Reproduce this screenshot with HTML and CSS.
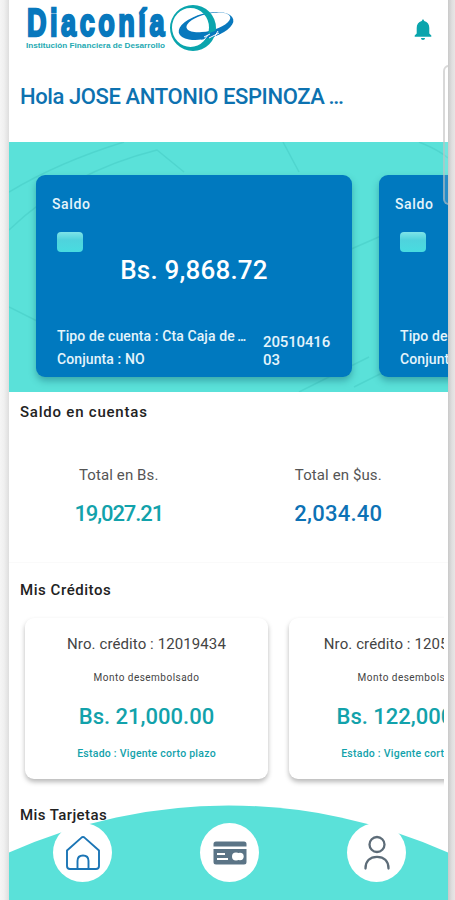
FILE: index.html
```html
<!DOCTYPE html>
<html lang="es">
<head>
    <meta charset="UTF-8">
    <meta name="viewport" content="width=device-width, initial-scale=1.0">
    <title>Diaconía</title>
    <link rel="stylesheet" href="styles.css">
</head>
<body>

<div class="phone">
    <header class="header">
        <svg class="logo" width="212" height="56" viewBox="0 0 212 56">
            <text class="logo-name" x="2" y="35.500" textLength="141" lengthAdjust="spacingAndGlyphs">Diaconía</text>
            <text class="logo-tag" x="1" y="47.500" textLength="139" lengthAdjust="spacingAndGlyphs">Institución Financiera de Desarrollo</text>
            <path fill="#0878bd" fill-rule="evenodd" d="M153.800 32.800A28 12.500 -14 1 1 208.200 19.200A28 12.500 -14 1 1 153.800 32.800zM161.500 27.800A22.500 8.500 -14 1 0 205.200 17A22.500 8.500 -14 1 0 161.500 27.800z"/>
            <path fill="#0aa5ad" fill-rule="evenodd" d="M145 28A23 23 0 1 1 191 28A23 23 0 1 1 145 28zM147 27.500A18.500 19.500 0 1 0 184 27.500A18.500 19.500 0 1 0 147 27.500z"/>
            <path fill="none" stroke="#0878bd" stroke-width="5" d="M176 37Q187 36 195 31"/>
            <path fill="none" stroke="#fff" stroke-width="1" d="M179 37l6-3M184 38l10-5M179 40l4-5M190 36l3-5"/>
        </svg>
        <svg class="bell" width="18" height="22" viewBox="0 0 18 22">
            <path fill="#0aa5ad" d="M9 0l1.300 2c3.300.800 5 3.400 5 7v5.500l2 2v1.300H.700v-1.300l2-2V9c0-3.600 1.700-6.200 5-7zM7 19h4c0 1.300-.800 2-2 2s-2-.700-2-2z"/>
        </svg>
    </header>
    <h1 class="greeting">Hola JOSE ANTONIO ESPINOZA <span class="dots">...</span></h1>

    <section class="banner">
        <svg class="banner-lines" width="439" height="250" viewBox="0 0 439 250">
            <path d="M0 50Q50 20 115 0M0 88Q60 30 148 8L175 30M274 0L290 30M0 165L30 180M340 108L372 94M290 250L360 215M410 0Q430 8 439 16M345 245L385 225"/>
        </svg>
        <div class="accounts">
            <div class="account">
                <p class="account-title">Saldo</p>
                <div class="chip"></div>
                <p class="account-amount">Bs. 9,868.72</p>
                <div class="account-info">
                    <p class="account-type">Tipo de cuenta : Cta Caja de <span class="dots">...</span><br>Conjunta : NO</p>
                    <p class="account-number">20510416<br>03</p>
                </div>
            </div>
            <div class="account">
                <p class="account-title">Saldo</p>
                <div class="chip"></div>
                <p class="account-amount">&nbsp;</p>
                <div class="account-info">
                    <p class="account-type">Tipo de<br>Conjunta</p>
                </div>
            </div>
        </div>
    </section>

    <h2 class="section-title balance-title">Saldo en cuentas</h2>
    <section class="totals">
        <div class="total">
            <p class="total-label">Total en Bs.</p>
            <p class="total-value">19,027.21</p>
        </div>
        <div class="total">
            <p class="total-label">Total en $us.</p>
            <p class="total-value blue">2,034.40</p>
        </div>
    </section>

    <h2 class="section-title credits-title">Mis Créditos</h2>
    <section class="credits">
        <div class="credit">
            <p class="credit-number">Nro. crédito : 12019434</p>
            <p class="credit-label">Monto desembolsado</p>
            <p class="credit-amount">Bs. 21,000.00</p>
            <p class="credit-status">Estado : Vigente corto plazo</p>
        </div>
        <div class="credit">
            <p class="credit-number">Nro. crédito : 120519434</p>
            <p class="credit-label">Monto desembolsado</p>
            <p class="credit-amount">Bs. 122,000.00</p>
            <p class="credit-status">Estado : Vigente corto plazo</p>
        </div>
    </section>

    <h2 class="section-title cards-title">Mis Tarjetas</h2>

    <nav class="navbar">
        <svg class="navbar-curve" width="439" height="95" viewBox="0 0 439 95">
            <path fill="#5ae1d9" d="M0 47.500A536 536 0 0 1 439 47.500V95H0z"/>
        </svg>
        <a class="nav-item">
            <svg width="36" height="36" viewBox="0 0 36 36" fill="none" stroke="#1b75b5" stroke-width="1.900" stroke-linecap="round" stroke-linejoin="round">
                <path d="M2 15.500L16.500 2.600q1.500-1.200 3 0L34 15.500V31q0 3-3 3H5q-3 0-3-3z"/>
                <path d="M12.500 34V26q0-5.500 5.500-5.500t5.500 5.500v8"/>
            </svg>
        </a>
        <a class="nav-item">
            <svg width="34" height="24" viewBox="0 0 34 24">
                <path fill="#5b7486" d="M3 .5h28q2.500 0 2.500 2.500v2.500H.5V3Q.5.500 3 .5zM.5 8h33v13q0 2.500-2.500 2.500H3Q.5 23.500.5 21z"/>
                <path stroke="#fff" stroke-width="2" d="M4 13h8M4 18h11"/>
                <circle cx="23" cy="15.500" r="4" fill="#fff"/>
                <circle cx="27" cy="15.500" r="3.700" fill="#fff"/>
            </svg>
        </a>
        <a class="nav-item">
            <svg width="28" height="36" viewBox="0 0 28 36" fill="none" stroke="#5d6c78" stroke-width="2.300">
                <circle cx="14" cy="9.500" r="7.500"/>
                <path stroke-linecap="round" d="M2.500 33.500C2.500 26 7 21.800 14 21.800S25.500 26 25.500 33.500"/>
            </svg>
        </a>
    </nav>
    <div class="edge-handle"></div>
</div>

</body>
</html>
```
FILE: styles.css
```css
* {
    box-sizing: border-box;
}
body {
    margin: 0;
    padding: 0 7px 0 9px;
    height: 900px;
    overflow: hidden;
    background: linear-gradient(to right, #f5f5f5 0, #f0f0f0 4px, #dedede 9px, #dedede 446px, #c9c9c9 448px, #dfdfdf 452px, #e8e6e5 455px);
    font-family: Roboto, "Noto Sans", sans-serif;
}
h1, h2, p {
    margin: 0;
}
.phone {
    position: relative;
    width: 439px;
    height: 900px;
    overflow: hidden;
    background-color: #fff;
}
.header {
    display: flex;
    justify-content: space-between;
    height: 76px;
    padding: 0 16px;
}
.logo {
    overflow: visible;
}
.logo-name {
    font: bold 38px "Liberation Sans", sans-serif;
    letter-spacing: 5px;
    fill: #0878bd;
    stroke: #0878bd;
    stroke-width: 2.4px;
}
.logo-tag {
    font: bold 7px "Liberation Sans", sans-serif;
    fill: #25aab2;
}
.bell {
    margin-top: 19px;
}
.greeting {
    height: 66px;
    padding-left: 11px;
    font-size: 22px;
    line-height: 41px;
    font-weight: 500;
    letter-spacing: -0.4px;
    color: #0d72b0;
    white-space: nowrap;
}
.dots {
    margin-left: -1px;
    letter-spacing: -1.3px;
}
.banner {
    position: relative;
    height: 250px;
    padding: 33px 0 0 27px;
    background-color: #5ae1d9;
}
.banner-lines {
    position: absolute;
    top: 0;
    left: 0;
    fill: none;
    stroke: #4fd5ce;
    stroke-width: 1.5px;
}
.accounts {
    position: relative;
    display: flex;
    gap: 27px;
}
.account {
    flex: none;
    width: 316px;
    height: 202px;
    padding: 18px 16px 0;
    border-radius: 9px;
    background-color: #0079bf;
    color: #e4f4fb;
    box-shadow: 0 4px 7px rgba(0, 70, 90, 0.35);
}
.account-title {
    font-size: 14px;
    line-height: 22px;
    font-weight: 500;
    letter-spacing: 0.6px;
}
.chip {
    width: 26px;
    height: 20px;
    margin: 17px 0 0 5px;
    border-radius: 4px;
    background: linear-gradient(#7fe4e8, #4fd3dd 40%, #48dce0);
}
.account-amount {
    margin-top: 3px;
    font-size: 26px;
    line-height: 30px;
    font-weight: 500;
    letter-spacing: 0.2px;
    text-align: center;
    color: #fff;
}
.account-info {
    display: flex;
    margin: 40px 0 0 5px;
    white-space: nowrap;
}
.account-type {
    width: 206px;
    font-size: 14px;
    line-height: 23px;
    font-weight: 500;
    letter-spacing: 0.1px;
}
.account-number {
    padding-top: 8px;
    font-size: 15px;
    line-height: 18px;
    font-weight: 500;
    letter-spacing: -0.15px;
}
.section-title {
    padding-left: 11px;
    font-size: 15px;
    line-height: 20px;
    font-weight: 500;
    letter-spacing: 0.4px;
    color: #222;
}
.balance-title {
    margin-top: 10px;
    letter-spacing: 0.78px;
}
.credits-title {
    letter-spacing: 0.55px;
}
.totals {
    display: flex;
    height: 141px;
    margin-bottom: 17px;
    padding-top: 43px;
    border-bottom: 1px solid #fafafa;
    text-align: center;
}
.total {
    width: 220px;
}
.total-label {
    font-size: 15px;
    line-height: 20px;
    letter-spacing: 0.1px;
    color: #555;
}
.total-value {
    margin-top: 14px;
    font-size: 22px;
    line-height: 30px;
    font-weight: 500;
    letter-spacing: -1.1px;
    color: #12a2ab;
}
.blue {
    letter-spacing: 0.25px;
    color: #0d72b5;
}
.credits {
    display: flex;
    gap: 21px;
    width: 435px;
    height: 190px;
    padding: 18px 0 0 16px;
    overflow: hidden;
}
.credit {
    flex: none;
    width: 243px;
    height: 161px;
    padding-top: 16px;
    border-radius: 9px;
    background-color: #fff;
    box-shadow: 0 3px 5px rgba(0, 0, 0, 0.28);
    text-align: center;
    white-space: nowrap;
}
.credit-number {
    font-size: 15px;
    line-height: 20px;
    letter-spacing: 0.1px;
    color: #444;
}
.credit-label {
    margin-top: 14px;
    font-size: 10px;
    line-height: 20px;
    letter-spacing: 0.48px;
    color: #444;
}
.credit-amount {
    margin-top: 14px;
    font-size: 22px;
    line-height: 30px;
    font-weight: 500;
    color: #12a2ab;
}
.credit-status {
    margin-top: 12px;
    font-size: 10.5px;
    line-height: 20px;
    font-weight: 500;
    letter-spacing: 0.25px;
    color: #12a2ab;
}
.credit + .credit .credit-number {
    margin-left: -6px;
}
.cards-title {
    margin-top: 15px;
}
.navbar {
    position: absolute;
    left: 0;
    bottom: 0;
    display: flex;
    gap: 88px;
    width: 439px;
    height: 95px;
    padding: 18px 0 0 44px;
}
.navbar-curve {
    position: absolute;
    top: 0;
    left: 0;
}
.nav-item {
    position: relative;
    display: flex;
    align-items: center;
    justify-content: center;
    width: 59px;
    height: 59px;
    border-radius: 50%;
    background-color: #fff;
}
.edge-handle {
    position: absolute;
    top: 65px;
    right: -8px;
    width: 13px;
    height: 140px;
    border: 2px solid rgba(190, 190, 190, 0.6);
    border-radius: 6px;
    background-color: rgba(255, 255, 255, 0.15);
}
```
